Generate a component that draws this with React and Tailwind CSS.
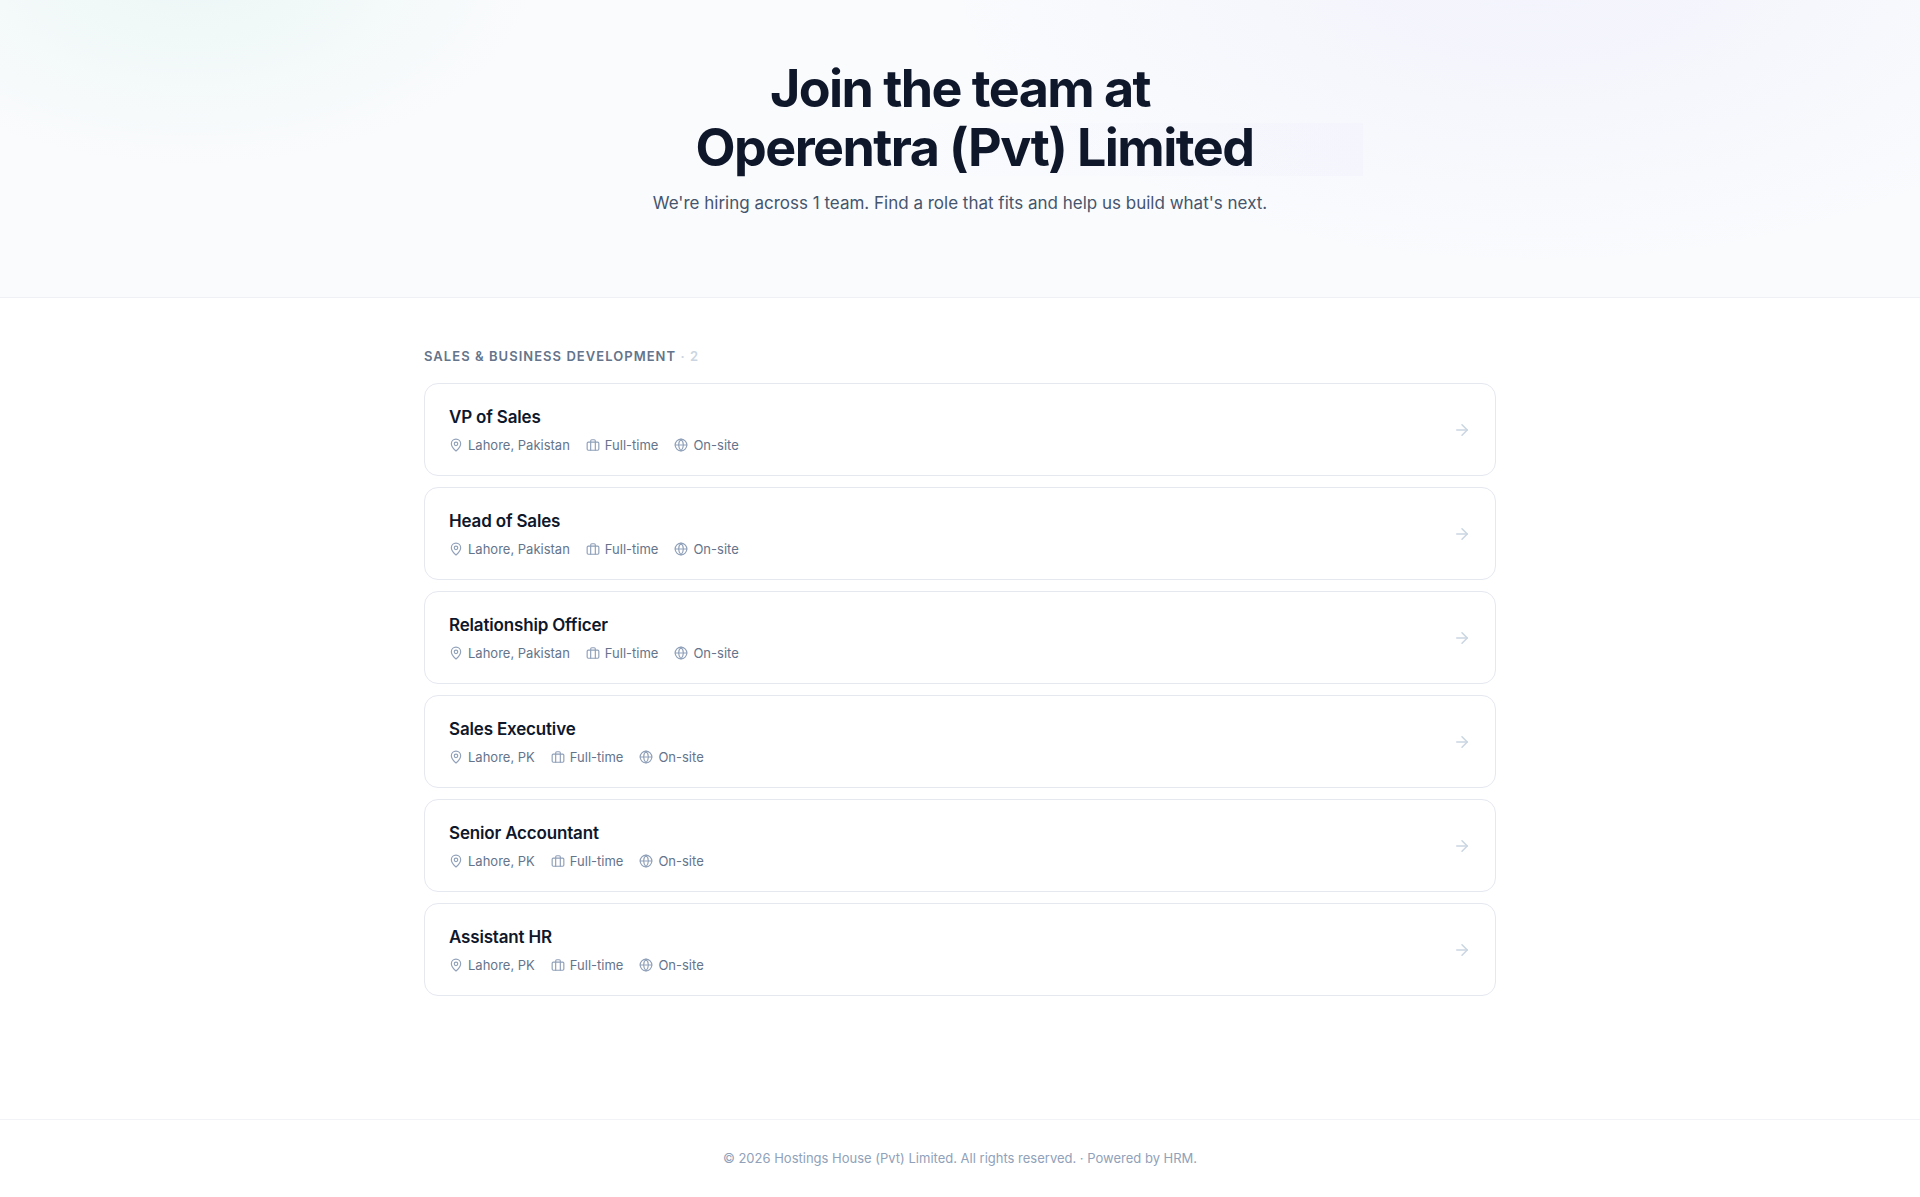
import React from 'react';
import { ArrowRight, Globe, MapPin } from 'lucide-react';

const jobs = [
  { id: 1, title: 'VP of Sales', location: 'Lahore, Pakistan', type: 'Full-time', mode: 'On-site' },
  { id: 2, title: 'Head of Sales', location: 'Lahore, Pakistan', type: 'Full-time', mode: 'On-site' },
  { id: 3, title: 'Relationship Officer', location: 'Lahore, Pakistan', type: 'Full-time', mode: 'On-site' },
  { id: 4, title: 'Sales Executive', location: 'Lahore, PK', type: 'Full-time', mode: 'On-site' },
  { id: 5, title: 'Senior Accountant', location: 'Lahore, PK', type: 'Full-time', mode: 'On-site' },
  { id: 6, title: 'Assistant HR', location: 'Lahore, PK', type: 'Full-time', mode: 'On-site' },
];

const BriefcaseIcon = () => (
  <svg
    className="w-[14px] h-[14px] text-slate-400"
    viewBox="0 0 24 24"
    fill="none"
    stroke="currentColor"
    strokeWidth="2"
    strokeLinecap="round"
    strokeLinejoin="round"
    aria-hidden="true"
  >
    <rect x="2" y="7" width="20" height="14" rx="2" />
    <path d="M16 21V5a2 2 0 0 0-2-2h-4a2 2 0 0 0-2 2v16" />
  </svg>
);

const JobCard = ({ job }) => (
  <a
    href={`#job-${job.id}`}
    className="flex items-center justify-between rounded-[14px] border border-[#e6e8f0] bg-white px-6 pt-[21px] pb-5 hover:border-slate-300 transition-colors"
  >
    <div>
      <h3 className="text-[17px] leading-6 font-semibold tracking-[-0.01em] text-slate-900">{job.title}</h3>
      <div className="mt-[6px] flex items-center gap-4 text-[13px] leading-5 text-[#64748b]">
        <span className="flex items-center gap-[5px]">
          <MapPin className="w-[14px] h-[14px] text-slate-400" />
          {job.location}
        </span>
        <span className="flex items-center gap-[5px]">
          <BriefcaseIcon />
          {job.type}
        </span>
        <span className="flex items-center gap-[5px]">
          <Globe className="w-[14px] h-[14px] text-slate-400" />
          {job.mode}
        </span>
      </div>
    </div>
    <ArrowRight className="w-[18px] h-[18px] text-slate-300" />
  </a>
);

const App = () => {
  return (
    <div className="min-h-screen flex flex-col bg-white font-['Inter',sans-serif] text-slate-900">
      <header className="border-b border-[#eef0f5] bg-[#fafbfd] bg-[radial-gradient(1000px_500px_at_80%_-10%,rgba(99,102,241,0.05),transparent_60%),radial-gradient(700px_400px_at_10%_-10%,rgba(16,185,129,0.06),transparent_50%)] px-6 pt-[59px] pb-20 text-center">
        <h1 className="text-[52px] leading-[59px] font-bold tracking-[-0.03em] text-slate-900">
          Join the team at
          <br />
          <span className="inline-block bg-linear-to-r from-transparent from-40% to-indigo-500/2 pl-[139px] pr-[110px] pb-1 leading-[49px]">
            Operentra (Pvt) Limited
          </span>
        </h1>
        <p className="mt-3 text-[17px] leading-7 text-slate-600">
          We're hiring across 1 team. Find a role that fits and help us build what's next.
        </p>
      </header>

      <main className="w-full max-w-[1120px] mx-auto flex-1 px-6 pt-12 pb-16">
        <h2 className="text-[13px] leading-5 font-semibold uppercase tracking-[0.08em] text-[#64748b]">
          Sales &amp; Business Development <span className="text-[#cbd5e1]">· 2</span>
        </h2>
        <div className="mt-[17px] flex flex-col gap-[11px]">
          {jobs.map((job) => (
            <JobCard key={job.id} job={job} />
          ))}
        </div>
      </main>

      <footer className="border-t border-[#f1f3f7] px-6 pt-7 pb-[29px] text-center text-[13px] leading-5 text-slate-400">
        © 2026 Hostings House (Pvt) Limited. All rights reserved. · Powered by HRM.
      </footer>
    </div>
  );
};

export default App;
